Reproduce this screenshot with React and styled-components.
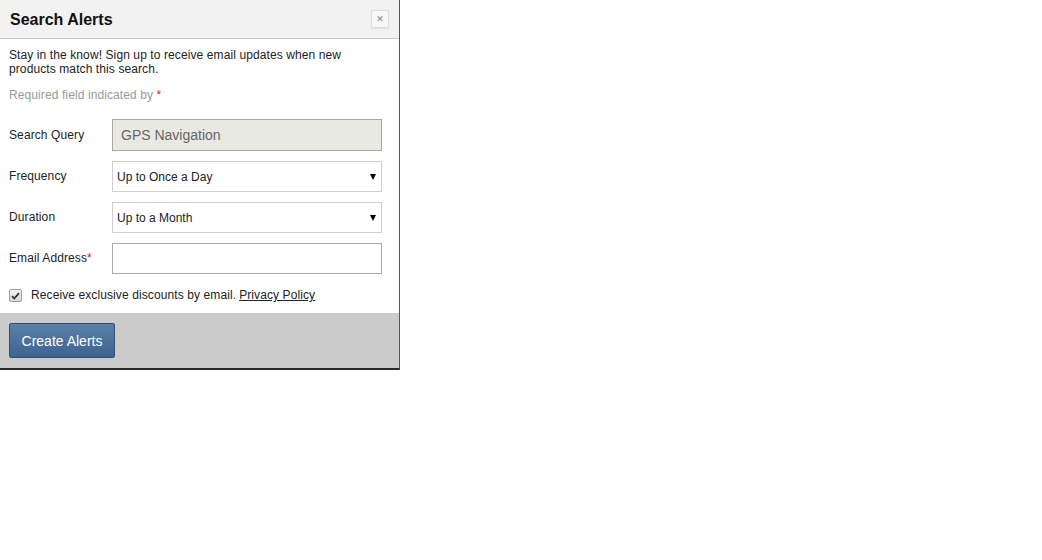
import styled, { createGlobalStyle } from "styled-components";

const GlobalStyle = createGlobalStyle`
  html, body {
    margin: 0;
    padding: 0;
    background: #fff;
  }
  body {
    font-family: "Liberation Sans", Arial, sans-serif;
    color: #222;
  }
`;

const Dialog = styled.div`
  width: 399px;
  border-right: 1px solid #555;
  border-bottom: 2px solid #2a2a2a;
  background: #fff;
`;

const Header = styled.div`
  height: 38px;
  background: #f2f2f2;
  border-bottom: 1px solid #c8c8c8;
  display: flex;
  align-items: center;
  justify-content: space-between;
  padding: 0 10px 0 10px;
`;

const Title = styled.h2`
  margin: 0;
  font-size: 16px;
  font-weight: bold;
  color: #111;
  padding-top: 1px;
`;

const Close = styled.button`
  width: 18px;
  height: 18px;
  margin-top: -1px;
  border: 1px solid #dcdcdc;
  background: #f7f7f7;
  color: #8a8a8a;
  font-size: 12px;
  line-height: 14px;
  padding: 0;
  font-family: "Liberation Sans", Arial, sans-serif;
  box-shadow: 0 1px 1px rgba(0, 0, 0, 0.05);
`;

const Body = styled.div`
  padding: 9px 9px 0 9px;
  letter-spacing: 0.1px;
`;

const Intro = styled.p`
  margin: 0;
  font-size: 12px;
  line-height: 14px;
  color: #222;
`;

const Required = styled.p`
  margin: 12px 0 0;
  font-size: 12px;
  line-height: 14px;
  color: #999;
`;

const Star = styled.span`
  color: #e02020;
`;

const Form = styled.div`
  margin-top: 17px;
  display: flex;
  flex-direction: column;
  gap: 10px;
`;

const Row = styled.div`
  display: flex;
  align-items: center;
`;

const Label = styled.label`
  width: 103px;
  font-size: 12px;
  color: #222;
  margin-top: -1px;
`;

const Field = styled.div`
  position: relative;
  width: 270px;
  height: ${(p) => (p.$readonly ? "32px" : "31px")};
  box-sizing: border-box;
  border: 1px solid ${(p) => (p.$readonly ? "#a9a9a4" : p.$select ? "#cfcfcf" : "#a9a9a9")};
  background: ${(p) => (p.$readonly ? "#e9e9e3" : "#fff")};
  display: flex;
  align-items: center;
  padding-left: ${(p) => (p.$readonly ? "8px" : "4px")};
  font-size: ${(p) => (p.$readonly ? "14px" : "12px")};
  letter-spacing: 0;
  color: ${(p) => (p.$readonly ? "#666" : "#222")};
`;

const Arrow = styled.span`
  position: absolute;
  right: 5px;
  top: 12px;
  width: 0;
  height: 0;
  border-left: 3px solid transparent;
  border-right: 3px solid transparent;
  border-top: 6px solid #000;
`;

const CheckRow = styled.div`
  margin-top: 14px;
  display: flex;
  align-items: center;
  font-size: 12px;
  line-height: 14px;
  color: #222;
  padding-bottom: 11px;
`;

const Box = styled.span`
  width: 11px;
  height: 11px;
  border: 1px solid #a0a0a0;
  border-radius: 2px;
  background: linear-gradient(#f4f4f4, #d8d8d8);
  display: flex;
  align-items: center;
  justify-content: center;
  margin-right: 9px;
  margin-top: 1px;
`;

const Link = styled.a`
  margin-left: 3px;
  color: #222;
  text-decoration: underline;
`;

const Footer = styled.div`
  background: #cbcbcb;
  padding: 10px 9px 10px;
`;

const Button = styled.button`
  display: block;
  height: 35px;
  width: 106px;
  border: 1px solid #2e4f76;
  border-radius: 2px;
  background: linear-gradient(#5a80a8, #3d6490);
  color: #fff;
  font-size: 14px;
  font-family: "Liberation Sans", Arial, sans-serif;
  padding: 0;
`;

export default function App() {
  return (
    <>
      <GlobalStyle />
      <Dialog>
        <Header>
          <Title>Search Alerts</Title>
          <Close>×</Close>
        </Header>
        <Body>
          <Intro>
            Stay in the know! Sign up to receive email updates when new
            <br />
            products match this search.
          </Intro>
          <Required>
            Required field indicated by <Star>*</Star>
          </Required>
          <Form>
            <Row>
              <Label>Search Query</Label>
              <Field $readonly>GPS Navigation</Field>
            </Row>
            <Row>
              <Label>Frequency</Label>
              <Field $select>
                Up to Once a Day
                <Arrow />
              </Field>
            </Row>
            <Row>
              <Label>Duration</Label>
              <Field $select>
                Up to a Month
                <Arrow />
              </Field>
            </Row>
            <Row>
              <Label>
                Email Address<Star>*</Star>
              </Label>
              <Field />
            </Row>
          </Form>
          <CheckRow>
            <Box>
              <svg width="9" height="8" viewBox="0 0 9 8">
                <path d="M1 4.2 L3.3 6.5 L8 1.2" fill="none" stroke="#333" strokeWidth="1.8" />
              </svg>
            </Box>
            Receive exclusive discounts by email.
            <Link>Privacy Policy</Link>
          </CheckRow>
        </Body>
        <Footer>
          <Button>Create Alerts</Button>
        </Footer>
      </Dialog>
    </>
  );
}
